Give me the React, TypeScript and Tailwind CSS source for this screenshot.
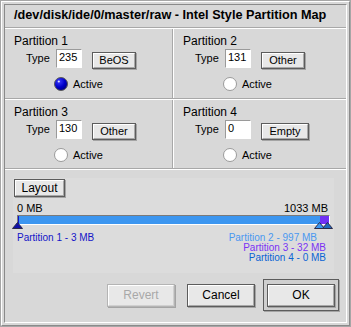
import type { ReactNode } from 'react';

function BeButton({
  children,
  className = '',
  disabled = false,
}: {
  children: ReactNode;
  className?: string;
  disabled?: boolean;
}) {
  return (
    <div
      className={`flex shrink-0 border ${
        disabled ? 'border-[#b4b4b4]' : 'border-[#5c5c5c]'
      } shadow-[1px_1px_0_#a4a4a4] ${className}`}
    >
      <div
        className={`flex flex-1 items-center justify-center border-t border-l border-t-white border-l-white border-b border-r ${
          disabled ? 'border-b-[#d0d0d0] border-r-[#d0d0d0] text-[#a8a8a8]' : 'border-b-[#a8a8a8] border-r-[#a8a8a8] text-black'
        } bg-[#e8e8e8] leading-none`}
      >
        {children}
      </div>
    </div>
  );
}

function Radio({ on }: { on: boolean }) {
  return (
    <svg width="14" height="14" viewBox="0 0 14 14" className="shrink-0">
      <defs>
        <radialGradient id="rb" cx="0.35" cy="0.3" r="0.75">
          <stop offset="0" stopColor="#3a3aff" />
          <stop offset="0.6" stopColor="#0000c8" />
          <stop offset="1" stopColor="#000080" />
        </radialGradient>
      </defs>
      {on ? (
        <>
          <circle cx="7" cy="7" r="6.5" fill="url(#rb)" stroke="#5a5a5a" strokeWidth="1" />
          <circle cx="4.8" cy="4.5" r="1.1" fill="#e0e0ff" />
        </>
      ) : (
        <circle cx="7" cy="7" r="6.5" fill="#ffffff" stroke="#9a9a9a" strokeWidth="1" />
      )}
    </svg>
  );
}

function Cell({
  n,
  type,
  label,
  btnClass,
  active,
  border,
}: {
  n: number;
  type: string;
  label: string;
  btnClass: string;
  active: boolean;
  border: string;
}) {
  return (
    <div className={`flex flex-col ${border}`}>
      <div className="pl-[9px] pt-[5px] text-[12px] leading-[14px]">Partition {n}</div>
      <div className="mt-[1px] flex items-start pl-[21px]">
        <span className="w-[30px] pt-[3px] text-[11px] leading-[13px]">Type</span>
        <div className="h-[19px] w-[26px] border-t border-l border-t-[#9a9a9a] border-l-[#9a9a9a] border-b border-r border-b-white border-r-white bg-white pl-[2px] pt-[1px] text-[11px] leading-[12px]">
          {type}
        </div>
        <BeButton className={`ml-[10px] mt-[3px] h-[17px] text-[11px] ${btnClass}`}>{label}</BeButton>
      </div>
      <div className="mt-[8px] flex items-center gap-[5px] pl-[49px]">
        <Radio on={active} />
        <span className="text-[11px] leading-[14px]">Active</span>
      </div>
    </div>
  );
}

function Tri({ fill, className }: { fill: string; className: string }) {
  return (
    <svg width="11" height="7" viewBox="0 0 11 7" className={`absolute ${className}`}>
      <polygon points="0.5,6.5 5.5,0.5 10.5,6.5" fill={fill} stroke="#2a2a4a" strokeWidth="1" />
    </svg>
  );
}

export default function App() {
  return (
    <div className="h-[327px] w-[351px] border border-[#a6a6a6] bg-[#d8d8d8] font-['Liberation_Sans',Arial,sans-serif] text-black">
      <div className="h-full w-full border border-t-white border-l-white border-b-[#8a8a8a] border-r-[#8a8a8a] p-[2px]">
        <div className="flex h-full w-full flex-col border border-t-[#8a8a8a] border-l-[#8a8a8a] border-b-white border-r-white">
          <div className="flex h-[23px] items-center border-b border-b-[#a8a8a8] pl-[9px] text-[12.7px] font-bold">
            /dev/disk/ide/0/master/raw - Intel Style Partition Map
          </div>
          <div className="h-px bg-white" />

          <div className="grid h-[69px] grid-cols-[168px_1fr]">
            <Cell n={1} type="235" label="BeOS" btnClass="w-[44px]" active border="border-r border-r-[#a8a8a8]" />
            <Cell n={2} type="131" label="Other" btnClass="w-[44px]" active={false} border="border-l border-l-white" />
          </div>
          <div className="h-px bg-[#a8a8a8]" />
          <div className="h-px bg-white" />
          <div className="grid h-[68px] grid-cols-[168px_1fr]">
            <Cell n={3} type="130" label="Other" btnClass="w-[44px]" active={false} border="border-r border-r-[#a8a8a8]" />
            <Cell n={4} type="0" label="Empty" btnClass="w-[48px]" active={false} border="border-l border-l-white" />
          </div>
          <div className="h-px bg-[#a8a8a8]" />
          <div className="h-px bg-white" />

          <div className="ml-[8px] mt-[8px] flex h-[95px] w-[321px] flex-col bg-[#dcdcdc]">
            <BeButton className="ml-[1px] mt-[1px] h-[18px] w-[51px] text-[12px]">Layout</BeButton>
            <div className="mt-[5px] flex justify-between pl-[4px] pr-[6px] text-[11px] leading-[12px]">
              <span>0 MB</span>
              <span>1033 MB</span>
            </div>
            <div className="relative ml-[4px] mt-[1px] h-[10px] w-[313px]">
              <div className="flex h-full w-full border-t border-l border-t-[#7a7a7a] border-l-[#7a7a7a] border-b border-r border-b-white border-r-white">
                <div className="h-full w-[1px] bg-[#1010c8]" />
                <div className="h-full w-[301px] bg-[#3c96f0]" />
                <div className="h-full w-[9px] bg-[#7030f4]" />
              </div>
              <Tri fill="#1010a8" className="left-[-5px] top-[7px]" />
              <Tri fill="#3c96f0" className="left-[297px] top-[7px]" />
              <Tri fill="#2068c0" className="left-[305px] top-[7px]" />
            </div>
            <div className="mt-[8px] flex justify-between pl-[4px] pr-[17px] text-[10px] leading-[10px]">
              <span className="text-[#1414c8]">Partition 1 - 3 MB</span>
              <span className="text-[#4a98f0]">Partition 2 - 997 MB</span>
            </div>
            <div className="self-end pr-[8px] text-[10px] leading-[10px] text-[#7a32f4]">Partition 3 - 32 MB</div>
            <div className="self-end pr-[8px] text-[10px] leading-[10px] text-[#0a64d4]">Partition 4 - 0 MB</div>
          </div>

          <div className="mt-[6px] flex items-center justify-end pr-[7px]">
            <BeButton disabled className="h-[23px] w-[68px] text-[12px]">Revert</BeButton>
            <BeButton className="ml-[12px] h-[23px] w-[68px] text-[12px]">Cancel</BeButton>
            <div className="ml-[8px] flex h-[32px] w-[76px] items-center justify-center border border-[#5c5c5c] bg-[#cfcfcf] shadow-[1px_1px_0_#a4a4a4]">
              <BeButton className="h-[23px] w-[68px] text-[12px]">OK</BeButton>
            </div>
          </div>
        </div>
      </div>
    </div>
  );
}
